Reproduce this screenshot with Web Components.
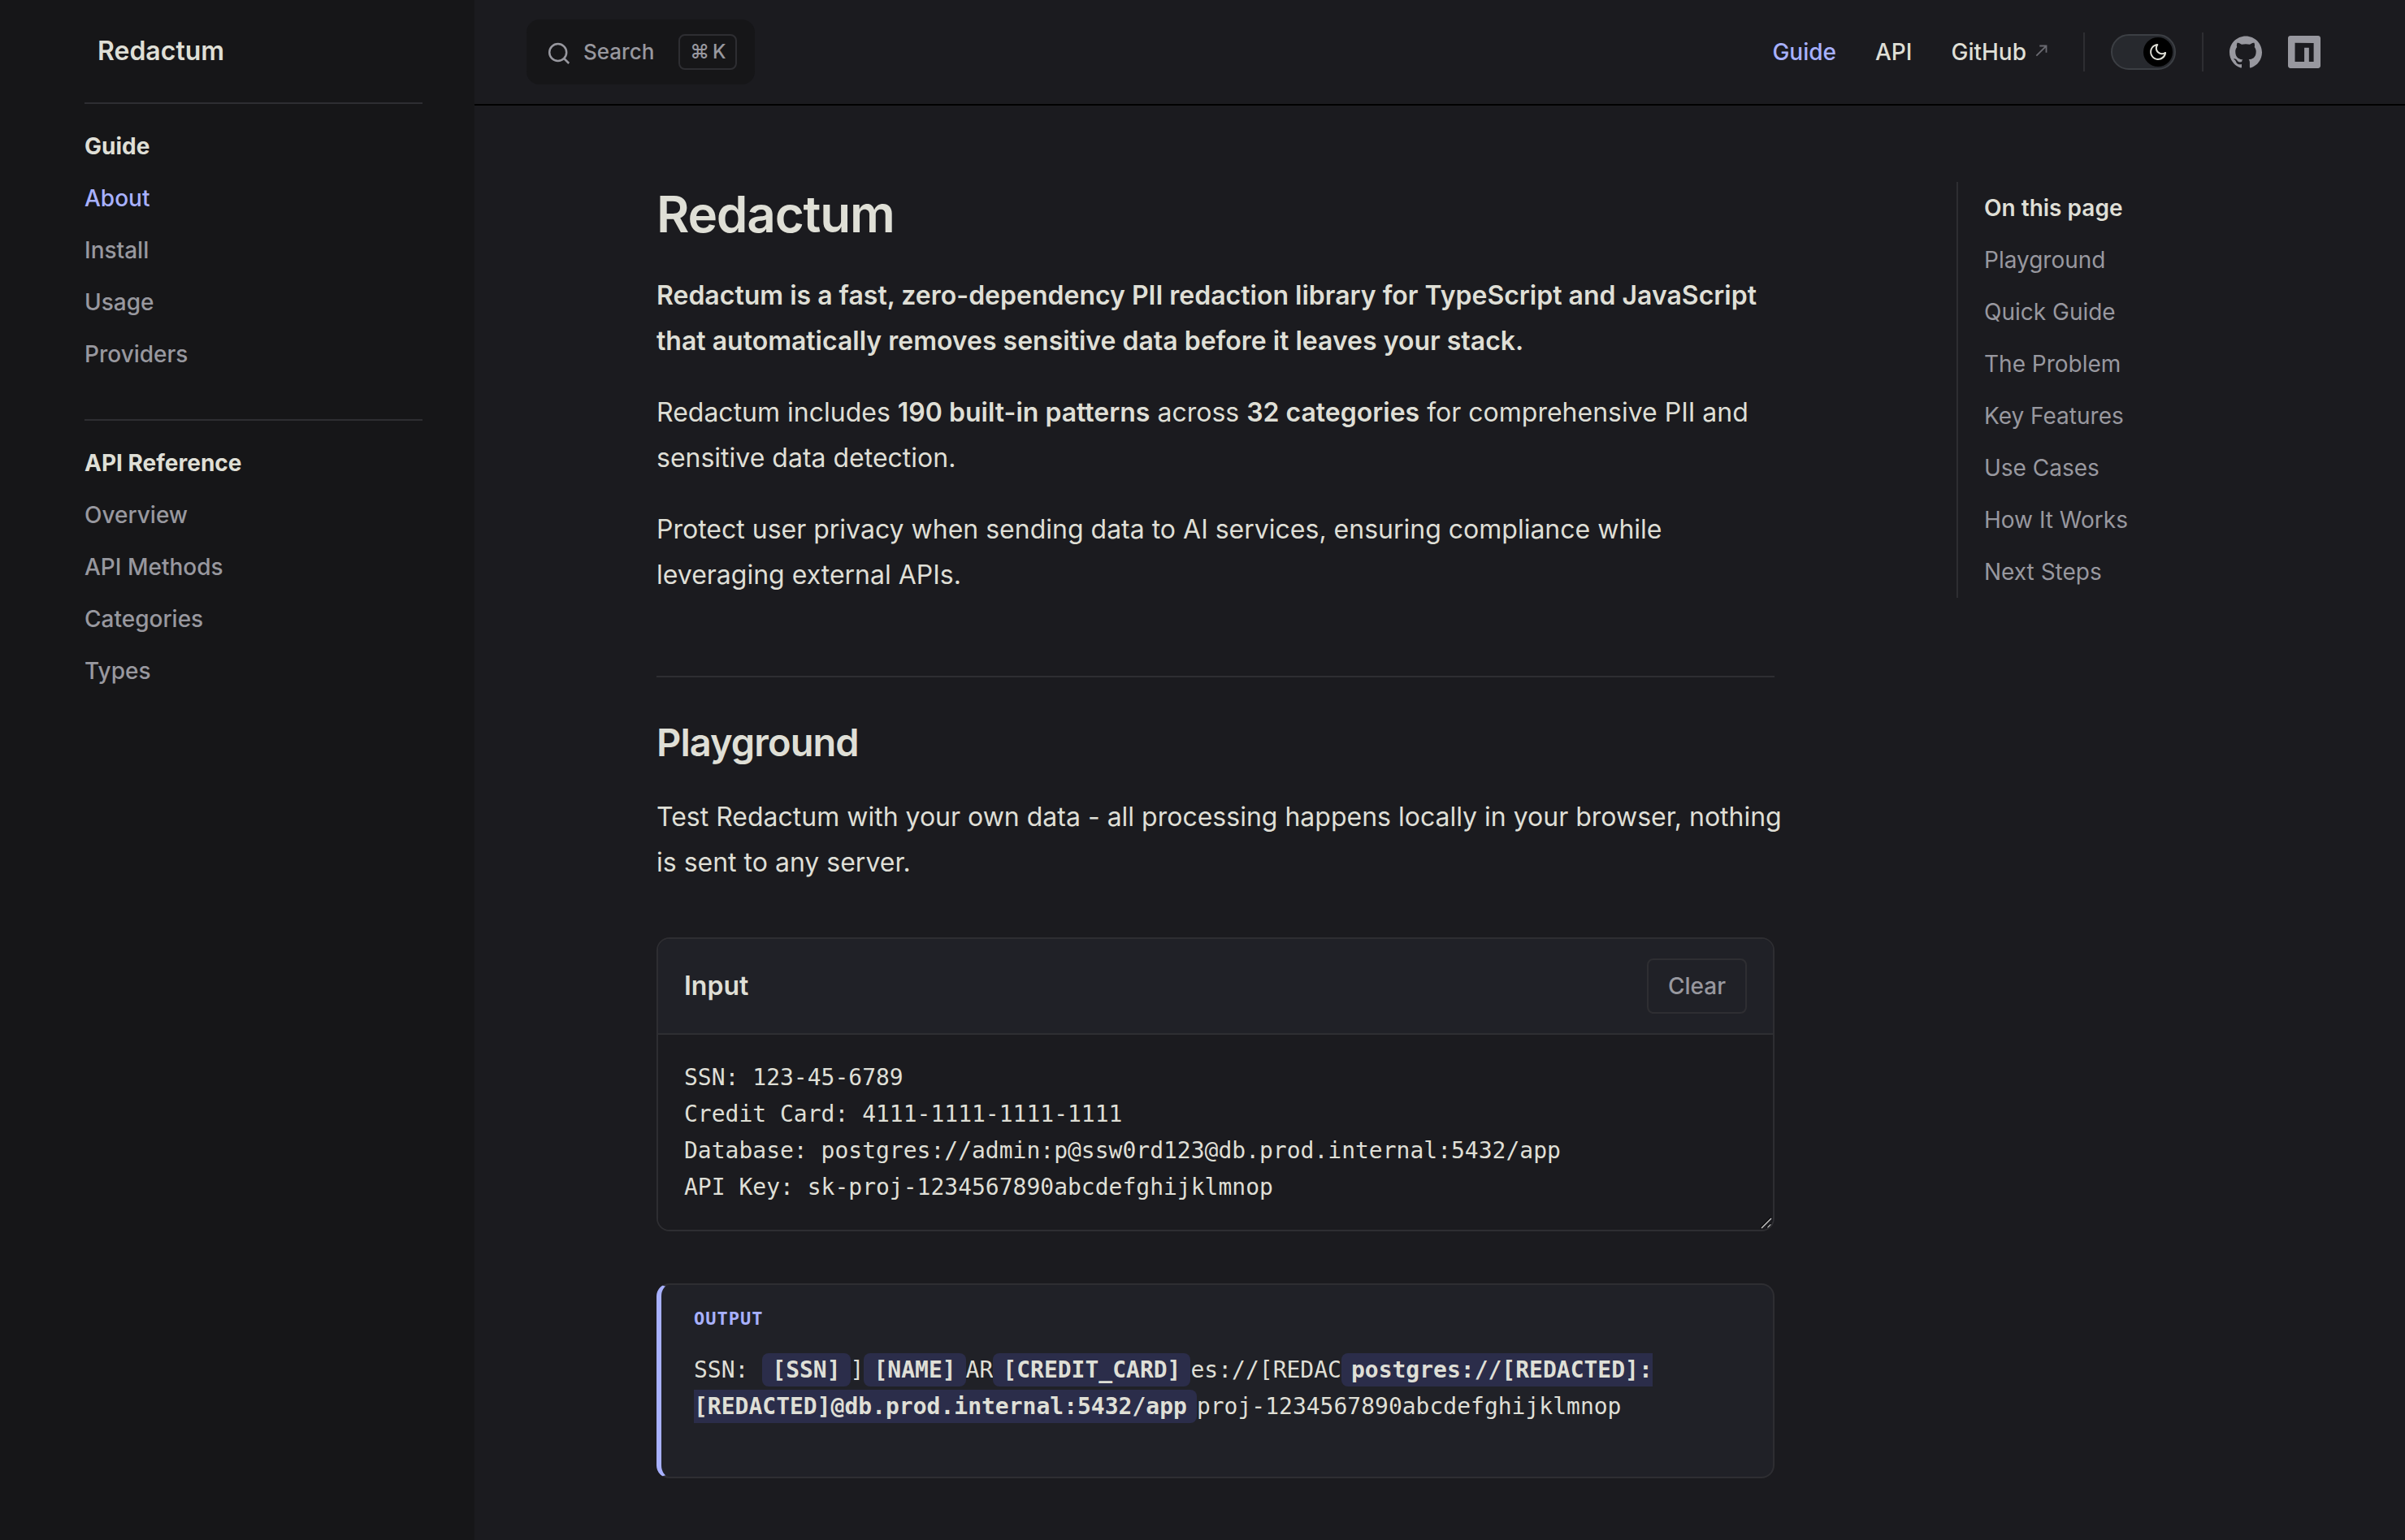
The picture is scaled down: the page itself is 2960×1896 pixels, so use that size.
<!DOCTYPE html>
<html lang="en">
<head>
<meta charset="utf-8">
<meta name="viewport" content="width=device-width, initial-scale=1">
<title>Redactum</title>
<style>
  :root {
    color-scheme: dark;
    --bg: #1b1b1f;
    --bg-alt: #161618;
    --bg-soft: #202127;
    --gutter: #000;
    --divider: #2e2e32;
    --text-1: #dfdfd6;
    --text-2: #98989f;
    --text-3: #6a6a71;
    --brand: #a8b1ff;
    --brand-soft: #2b2d4a;
    --font: Inter, "Liberation Sans", sans-serif;
    --mono: "DejaVu Sans Mono", "Liberation Mono", monospace;
  }
  body {
    margin: 0;
    background: var(--bg);
    color: var(--text-1);
    font-family: var(--font);
    font-size: 28px;
    line-height: 48px;
    -webkit-font-smoothing: antialiased;
  }
</style>
</head>
<body>
<docs-layout>
  <docs-sidebar slot="sidebar" heading="Redactum">
    <sidebar-group heading="Guide">
      <sidebar-link href="#about" active>About</sidebar-link>
      <sidebar-link href="#install">Install</sidebar-link>
      <sidebar-link href="#usage">Usage</sidebar-link>
      <sidebar-link href="#providers">Providers</sidebar-link>
    </sidebar-group>
    <sidebar-group heading="API Reference">
      <sidebar-link href="#overview">Overview</sidebar-link>
      <sidebar-link href="#methods">API Methods</sidebar-link>
      <sidebar-link href="#categories">Categories</sidebar-link>
      <sidebar-link href="#types">Types</sidebar-link>
    </sidebar-group>
  </docs-sidebar>
  <docs-nav slot="nav"></docs-nav>
  <docs-article slot="content"></docs-article>
  <page-outline slot="outline" heading="On this page">
    <outline-link href="#playground">Playground</outline-link>
    <outline-link href="#quick-guide">Quick Guide</outline-link>
    <outline-link href="#problem">The Problem</outline-link>
    <outline-link href="#features">Key Features</outline-link>
    <outline-link href="#use-cases">Use Cases</outline-link>
    <outline-link href="#how">How It Works</outline-link>
    <outline-link href="#next">Next Steps</outline-link>
  </page-outline>
</docs-layout>

<script>
  const define = (name, render) => customElements.define(name, class extends HTMLElement {
    constructor() {
      super();
      this.attachShadow({ mode: "open" });
    }
    connectedCallback() {
      this.shadowRoot.innerHTML = render(this);
    }
  });

  define("docs-layout", () => `
    <style>
      :host { display: grid; grid-template-columns: 584px minmax(0, 1fr); min-height: 100vh; }
      .main { display: flex; flex-direction: column; min-width: 0; }
      .body {
        display: grid;
        grid-template-columns: minmax(0, 1fr) 448px;
        gap: 224px;
        align-items: start;
        padding: 94px 104px 0 224px;
      }
    </style>
    <slot name="sidebar"></slot>
    <div class="main">
      <slot name="nav"></slot>
      <div class="body">
        <slot name="content"></slot>
        <slot name="outline"></slot>
      </div>
    </div>`);

  define("docs-sidebar", el => `
    <style>
      :host { display: block; box-sizing: border-box; padding: 0 64px 0 104px; background: var(--bg-alt); }
      .title {
        display: flex; align-items: center; height: 126px; padding-left: 16px;
        color: var(--text-1); font-size: 32px; font-weight: 600; text-decoration: none;
      }
    </style>
    <a class="title" href="#home">${el.getAttribute("heading")}</a>
    <nav aria-label="Sidebar"><slot></slot></nav>`);

  define("sidebar-group", el => `
    <style>
      :host { display: block; border-top: 2px solid var(--divider); padding: 20px 0 48px; }
      h2 { margin: 0; padding: 8px 0; font-size: 28px; line-height: 48px; font-weight: 700; color: var(--text-1); }
    </style>
    <h2>${el.getAttribute("heading")}</h2>
    <slot></slot>`);

  define("sidebar-link", el => `
    <style>
      :host { display: block; padding: 8px 0; }
      a { display: block; color: var(--text-2); font-weight: 500; text-decoration: none; }
      :host([active]) a { color: var(--brand); }
    </style>
    <a href="${el.getAttribute("href")}"><slot></slot></a>`);

  define("docs-nav", () => `
    <style>
      :host {
        display: flex; align-items: center; justify-content: space-between;
        height: 128px; padding: 0 88px 0 64px; border-bottom: 2px solid var(--gutter);
      }
      nav, .end { display: flex; align-items: center; }
      .rule { width: 2px; height: 48px; background: var(--divider); }
      .first { margin: 0 32px 0 16px; }
      .second { margin: 0 16px 0 32px; }
    </style>
    <search-button></search-button>
    <div class="end">
      <nav aria-label="Main">
        <nav-link href="#guide" active>Guide</nav-link>
        <nav-link href="#api">API</nav-link>
        <nav-link href="#github" external>GitHub</nav-link>
      </nav>
      <span class="rule first"></span>
      <theme-switch></theme-switch>
      <span class="rule second"></span>
      <social-link href="#github" label="GitHub"><svg viewBox="0 0 24 24" width="40" height="40" fill="currentColor"><path d="M12 .297c-6.63 0-12 5.373-12 12 0 5.303 3.438 9.8 8.205 11.385.6.113.82-.258.82-.577 0-.285-.01-1.04-.015-2.04-3.338.724-4.042-1.61-4.042-1.61C4.422 18.07 3.633 17.7 3.633 17.7c-1.087-.744.084-.729.084-.729 1.205.084 1.838 1.236 1.838 1.236 1.07 1.835 2.809 1.305 3.495.998.108-.776.417-1.305.76-1.605-2.665-.3-5.466-1.332-5.466-5.93 0-1.31.465-2.38 1.235-3.22-.135-.303-.54-1.523.105-3.176 0 0 1.005-.322 3.3 1.23.96-.267 1.98-.399 3-.405 1.02.006 2.04.138 3 .405 2.28-1.552 3.285-1.23 3.285-1.23.645 1.653.24 2.873.12 3.176.765.84 1.23 1.91 1.23 3.22 0 4.61-2.805 5.625-5.475 5.92.42.36.81 1.096.81 2.22 0 1.606-.015 2.896-.015 3.286 0 .315.21.69.825.57C20.565 22.092 24 17.592 24 12.297c0-6.627-5.373-12-12-12"/></svg></social-link>
      <social-link href="#npm" label="npm"><svg viewBox="0 0 24 24" width="40" height="40" fill="currentColor"><path d="M1.763 0C.786 0 0 .786 0 1.763v20.474C0 23.214.786 24 1.763 24h20.474c.977 0 1.763-.786 1.763-1.763V1.763C24 .786 23.214 0 22.237 0zM5.13 5.323l13.837.019-.009 13.836h-3.464l.01-10.382h-3.456L12.04 19.17H5.113z"/></svg></social-link>
    </div>`);

  define("search-button", () => `
    <style>
      :host { display: block; }
      button {
        display: flex; align-items: center; height: 80px; margin: 0; padding: 0 22px 0 24px;
        border: 0; border-radius: 16px; background: var(--bg-alt); color: var(--text-2);
        font: 500 26px/48px var(--font); cursor: pointer;
      }
      svg { margin-right: 14px; }
      kbd {
        display: flex; align-items: center; justify-content: center; gap: 4px; box-sizing: border-box;
        width: 72px; height: 44px; margin-left: 30px; border: 2px solid var(--divider); border-radius: 8px;
        font: 500 24px/40px var(--font);
      }
    </style>
    <button type="button">
      <svg width="32" height="32" viewBox="0 0 32 32" fill="none" stroke="currentColor" stroke-width="2.5" aria-hidden="true"><circle cx="14.7" cy="16.5" r="10.5"/><path d="M22.2 24l6 6"/></svg>
      <span>Search</span>
      <kbd><span>⌘</span><span>K</span></kbd>
    </button>`);

  define("nav-link", el => `
    <style>
      :host { display: block; }
      a {
        display: flex; align-items: center; padding: 0 24px;
        color: var(--text-1); font-weight: 500; text-decoration: none;
      }
      :host([active]) a { color: var(--brand); }
      svg { margin: 0 0 4px 8px; color: var(--text-3); }
    </style>
    <a href="${el.getAttribute("href")}"><slot></slot>${el.hasAttribute("external")
      ? `<svg width="22" height="22" viewBox="0 0 24 24" fill="currentColor" aria-hidden="true"><path d="M9 5v2h6.59L4 18.59 5.41 20 17 8.41V15h2V5H9z"/></svg>` : ""}</a>`);

  define("theme-switch", () => `
    <style>
      :host { display: block; }
      button {
        display: flex; align-items: center; justify-content: flex-end; box-sizing: border-box;
        width: 80px; height: 44px; margin: 0; padding: 0 2px; border: 2px solid #3c3f44;
        border-radius: 22px; background: #27292e; cursor: pointer;
      }
      span {
        display: flex; align-items: center; justify-content: center;
        width: 36px; height: 36px; border-radius: 50%; background: #000; color: var(--text-1);
      }
    </style>
    <button type="button" role="switch" aria-checked="true" aria-label="Dark theme"><span>
      <svg width="24" height="24" viewBox="0 0 24 24" fill="currentColor"><path d="M12.1,22c-0.3,0-0.6,0-0.9,0c-5.5-0.5-9.5-5.4-9-10.9c0.4-4.8,4.2-8.6,9-9c0.4,0,0.8,0.2,1,0.5c0.2,0.3,0.2,0.8-0.1,1.1c-2,2.7-1.4,6.4,1.3,8.4c2.1,1.6,5,1.6,7.1,0c0.3-0.2,0.7-0.3,1.1-0.1c0.3,0.2,0.5,0.5,0.5,1c-0.2,2.7-1.5,5.1-3.6,6.8C16.6,21.2,14.4,22,12.1,22z M9.3,4.4c-2.9,1-5,3.6-5.2,6.8c-0.4,4.4,2.8,8.3,7.2,8.7c2.1,0.2,4.2-0.4,5.8-1.8c1.1-0.9,1.9-2.1,2.4-3.4c-2.5,0.9-5.3,0.5-7.5-1.1C9.2,11.4,8.1,7.7,9.3,4.4z"/></svg>
    </span></button>`);

  define("social-link", el => `
    <style>
      :host { display: block; }
      a { display: flex; align-items: center; justify-content: center; width: 72px; height: 72px; color: var(--text-2); }
    </style>
    <a href="${el.getAttribute("href")}" aria-label="${el.getAttribute("label")}"><slot></slot></a>`);

  define("page-outline", el => `
    <style>
      :host { display: block; border-left: 2px solid var(--divider); padding-left: 32px; }
      h2 { margin: 0; font-size: 28px; line-height: 64px; font-weight: 600; }
    </style>
    <h2>${el.getAttribute("heading")}</h2>
    <nav aria-label="On this page"><slot></slot></nav>`);

  define("outline-link", el => `
    <style>
      :host { display: block; }
      a { display: block; line-height: 64px; font-weight: 400; color: var(--text-2); text-decoration: none; }
    </style>
    <a href="${el.getAttribute("href")}"><slot></slot></a>`);

  define("docs-article", () => `
    <style>
      :host { display: block; min-width: 0; font-size: 32px; line-height: 56px; }
      h1 { margin: 0; font-size: 62px; line-height: 80px; font-weight: 600; letter-spacing: -0.02em; }
      h2 {
        margin: 96px 0 32px; padding-top: 48px; border-top: 2px solid var(--divider);
        font-size: 47px; line-height: 64px; font-weight: 600; letter-spacing: -0.02em;
      }
      p { margin: 32px -16px 32px 0; }
      strong { font-weight: 600; }
      input-card, output-card { margin-top: 64px; }
    </style>
    <h1>Redactum</h1>
    <p><strong>Redactum is a fast, zero-dependency PII redaction library for TypeScript and JavaScript that automatically removes sensitive data before it leaves your stack.</strong></p>
    <p>Redactum includes <strong>190 built-in patterns</strong> across <strong>32 categories</strong> for comprehensive PII and sensitive data detection.</p>
    <p>Protect user privacy when sending data to AI services, ensuring compliance while leveraging external APIs.</p>
    <h2 id="playground">Playground</h2>
    <p>Test Redactum with your own data - all processing happens locally in your browser, nothing is sent to any server.</p>
    <input-card></input-card>
    <output-card></output-card>`);

  define("input-card", () => `
    <style>
      :host { display: block; border: 2px solid var(--divider); border-radius: 16px; overflow: hidden; }
      header {
        display: flex; align-items: center; justify-content: space-between;
        padding: 24px 32px; border-bottom: 2px solid var(--divider); background: var(--bg-soft);
      }
      label { font-size: 32px; font-weight: 600; }
      button {
        margin: 0; padding: 8px 24px; border: 2px solid var(--divider); border-radius: 8px;
        background: transparent; color: var(--text-2); font: 500 28px/48px var(--font); cursor: pointer;
      }
      .field { position: relative; }
      textarea {
        display: block; box-sizing: border-box; width: 100%; height: 240px; margin: 0;
        padding: 30px 32px; border: 0; outline: 0; resize: vertical;
        background: var(--bg); color: var(--text-1); font: 28px/45px var(--mono);
      }
      textarea::-webkit-resizer { background: transparent; }
      .grip { position: absolute; right: 0; bottom: 0; pointer-events: none; }
    </style>
    <header><label for="source">Input</label><button type="button">Clear</button></header>
    <div class="field">
      <textarea id="source" spellcheck="false">SSN: 123-45-6789
Credit Card: 4111-1111-1111-1111
Database: postgres://admin:p@ssw0rd123@db.prod.internal:5432/app
API Key: sk-proj-1234567890abcdefghijklmnop</textarea>
      <svg class="grip" width="16" height="16" viewBox="0 0 16 16" fill="none" aria-hidden="true">
        <path d="M1 13.5L13.5 1M8.5 13.5l5-5" stroke="#000" stroke-width="1.5"/>
        <path d="M2 14L14 2M9.500 13.500l4-4" stroke="#c4c4c4" stroke-width="1.5"/>
      </svg>
    </div>`);

  define("output-card", () => `
    <style>
      :host {
        display: block; padding: 28px 40px 64px; border: 2px solid var(--divider);
        border-left: 6px solid var(--brand); border-radius: 16px; background: var(--bg-soft);
        font-family: var(--mono);
      }
      .label {
        margin-bottom: 26px; color: var(--brand); font-size: 22px; line-height: 28px;
        font-weight: 700; letter-spacing: 1px;
      }
      .result { font-size: 28px; line-height: 45px; }
      mark { padding: 4px 12px; border-radius: 8px; background: var(--brand-soft); color: inherit; font-weight: 700; }
    </style>
    <div class="label">OUTPUT</div>
    <div class="result">SSN: <mark>[SSN]</mark>]<mark>[NAME]</mark>AR<mark>[CREDIT_CARD]</mark>es://[REDAC<wbr><mark>postgres://[REDACTED]:<wbr>[REDACTED]@db.prod.internal:5432/app</mark>proj-1234567890abcdefghijklmnop</div>`);
</script>
</body>
</html>
